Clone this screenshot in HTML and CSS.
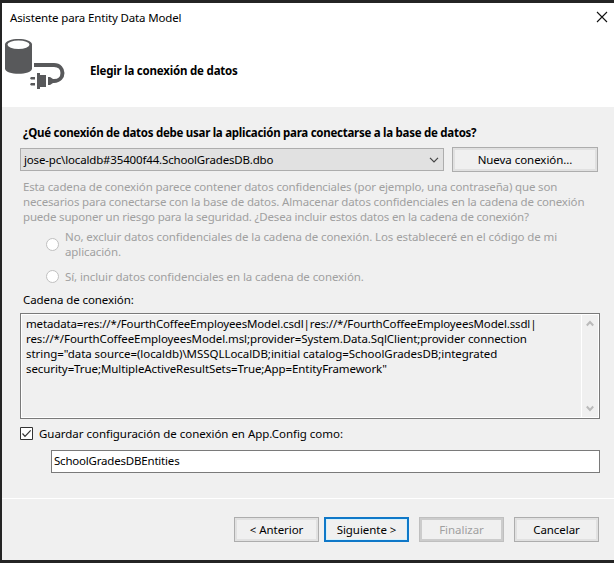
FILE: index.html
```html
<!DOCTYPE html>
<html lang="es">
<head>
<meta charset="utf-8">
<title>Asistente para Entity Data Model</title>
<link rel="stylesheet" href="styles.css">
</head>
<body>
<main class="window">
  <header class="header">
    <div class="titlebar">
      <span class="title">Asistente para Entity Data Model</span>
      <svg class="close" width="12" height="12" viewBox="0 0 12 12"><path d="M1 1L11 11M11 1L1 11" stroke="#111" stroke-width="1.1" fill="none"/></svg>
    </div>
    <div class="banner">
      <svg class="logo" width="62" height="54" viewBox="0 0 62 54">
        <path d="M2 8.500V32.500C2 39.500 29 39.500 29 32.500V8.500C29 1 2 1 2 8.500Z" fill="#58595b"/>
        <ellipse cx="15.500" cy="8.700" rx="11" ry="4.200" fill="#fff"/>
        <path d="M31 29H51C62.300 29 62.300 45 51 45H48" fill="none" stroke="#58595b" stroke-width="4"/>
        <path d="M34 37H37V39H43V51H37V53H34ZM28 41H32V43.500H28L27 42.200ZM28 47H32V49.500H28L27 48.200ZM45 41H47L50 43V47L47 49H45Z" fill="#58595b"/>
      </svg>
      <h1 class="heading">Elegir la conexión de datos</h1>
    </div>
  </header>
  <section class="content">
    <h2 class="question">¿Qué conexión de datos debe usar la aplicación para conectarse a la base de datos?</h2>
    <div class="source">
      <div class="combo"><span class="combo-text">jose-pc\localdb#35400f44.SchoolGradesDB.dbo</span>
        <svg width="10" height="6" viewBox="0 0 10 6"><path d="M1 .8L5 4.800L9 .8" fill="none" stroke="#444" stroke-width="1.200"/></svg>
      </div>
      <div class="button new"><span>Nueva conexión...</span></div>
    </div>
    <p class="notice"><span class="l1">Esta cadena de conexión parece contener datos confidenciales (por ejemplo, una contraseña) que son</span><span class="l2">necesarios para conectarse con la base de datos. Almacenar datos confidenciales en la cadena de conexión</span><span class="l3">puede suponer un riesgo para la seguridad. ¿Desea incluir estos datos en la cadena de conexión?</span></p>
    <div class="option first"><i class="radio"></i><p><span class="o1">No, excluir datos confidenciales de la cadena de conexión. Los estableceré en el código de mi</span><span class="o2">aplicación.</span></p></div>
    <div class="option second"><i class="radio"></i><p><span class="o3">Sí, incluir datos confidenciales en la cadena de conexión.</span></p></div>
    <div class="label"><span>Cadena de conexión:</span></div>
    <div class="connection">
      <p><span class="m1">metadata=res://*/FourthCoffeeEmployeesModel.csdl|res://*/FourthCoffeeEmployeesModel.ssdl|</span><span class="m2">res://*/FourthCoffeeEmployeesModel.msl;provider=System.Data.SqlClient;provider connection</span><span class="m3">string="data source=(localdb)\MSSQLLocalDB;initial catalog=SchoolGradesDB;integrated</span><span class="m4">security=True;MultipleActiveResultSets=True;App=EntityFramework"</span></p>
      <div class="scrollbar">
        <svg width="8" height="7" viewBox="0 0 8 7"><path d="M.8 5.500L4 2L7.200 5.500" fill="none" stroke="#bababa" stroke-width="2"/></svg>
        <svg width="8" height="7" viewBox="0 0 8 7"><path d="M.8 1.500L4 5L7.200 1.500" fill="none" stroke="#bababa" stroke-width="2"/></svg>
      </div>
    </div>
    <div class="save">
      <svg width="13" height="13" viewBox="0 0 13 13"><path d="M.5 .5H12.500V12.500H.5Z" fill="#fff" stroke="#333"/><path d="M2.500 6.500L5 9.300L10.700 3.300" fill="none" stroke="#333" stroke-width="1.200"/></svg>
      <span class="save-text">Guardar configuración de conexión en App.Config como:</span>
    </div>
    <div class="field"><span class="field-text">SchoolGradesDBEntities</span></div>
  </section>
  <footer class="footer">
    <div class="button back"><span>&lt; Anterior</span></div>
    <div class="button next"><span>Siguiente &gt;</span></div>
    <div class="button finish"><span>Finalizar</span></div>
    <div class="button cancel"><span>Cancelar</span></div>
  </footer>
</main>
</body>
</html>
```
FILE: styles.css
```css
* { box-sizing: border-box; }
body { margin: 0; width: 614px; height: 563px; background: #242424; overflow: hidden; padding: 3px 0 3px 2px; font: 11.5px/15px "Noto Sans", "Open Sans", sans-serif; color: #000; }
p, h1, h2 { margin: 0; font-size: 11.5px; line-height: 15px; }
span { white-space: nowrap; }
p span { display: block; }
svg { flex: none; display: block; }
.window { height: 557px; background: #f0f0f0; display: flex; flex-direction: column; }
.header { height: 104px; background: #fff; flex: none; }
.titlebar { height: 28px; display: flex; align-items: center; justify-content: space-between; padding: 0 6px 0 8px; }
.title { letter-spacing: -.15px; }
.banner { display: flex; align-items: center; gap: 25px; padding: 5px 0 0 1px; }
.heading { letter-spacing: -.2px; white-space: nowrap; padding-top: 15px; }
.content { padding: 18px 14px 0 18px; height: 391px; flex: none; }
.question { margin-left: 3px; letter-spacing: -.27px; white-space: nowrap; }
.source { display: flex; align-items: center; justify-content: space-between; margin: 7px 2px 0 0; height: 25px; }
.combo { width: 424px; height: 23px; border: 1px solid #adadad; background: #e1e1e1; display: flex; align-items: center; justify-content: space-between; padding: 0 4px 0 3px; }
.combo-text { letter-spacing: -.16px; }
.button { border: 1px solid #adadad; background: #f0f0f0; box-shadow: inset 0 0 0 2px #e1e1e1; height: 25px; width: 85px; display: flex; align-items: center; justify-content: center; letter-spacing: -.05px; }
.new { width: 146px; }
.notice { margin: 7px 0 0 3px; color: #a0a0a0; }
.l1, .l2 { letter-spacing: -.15px; }
.l3 { letter-spacing: -.187px; }
.option { display: flex; align-items: center; gap: 6px; margin-left: 26px; color: #a0a0a0; letter-spacing: -.1px; }
.first { margin-top: 5px; }
.second { margin-top: 10px; }
.radio { width: 13px; height: 13px; border: 1px solid #c0c0c0; border-radius: 50%; background: #fff; }
.label { margin: 8px 0 0 3px; letter-spacing: -.09px; }
.connection { margin-top: 6px; height: 106px; border: 1px solid #7a7a7a; box-shadow: inset 0 0 0 1px #fff; padding: 1px; display: flex; justify-content: space-between; }
.connection p { padding: 1px 0 0 4px; }
.m1 { letter-spacing: -.15px; }
.m2, .m4 { letter-spacing: -.09px; }
.m3 { letter-spacing: -.05px; }
.scrollbar { width: 17px; border-left: 1px solid #fff; display: flex; flex-direction: column; justify-content: space-between; align-items: center; padding: 5px 0; }
.save { display: flex; align-items: center; gap: 6px; margin-top: 7px; letter-spacing: -.03px; }
.field { margin: 9px 0 0 31px; height: 23px; border: 1px solid #7a7a7a; background: #fff; padding: 2px 2px; letter-spacing: -.2px; }
.footer { border-top: 1px solid #fff; flex: 1; display: flex; align-items: flex-start; padding: 18px 15px 0 0; justify-content: flex-end; }
.next { margin-left: 5px; border: 2px solid #0f78c8; box-shadow: inset 0 0 0 1px #d5f1fc; }
.finish { margin: 0 10px; border-color: #bfbfbf; box-shadow: inset 0 0 0 2px #ccc; color: #a0a0a0; }
```
